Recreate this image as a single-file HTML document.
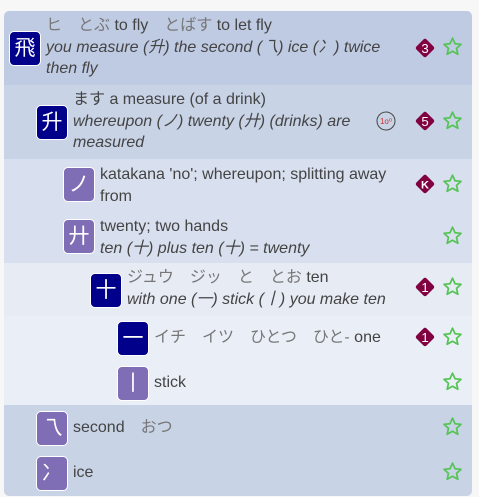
<!DOCTYPE html>
<html><head><meta charset="utf-8"><style>
body{margin:0;width:479px;height:497px;background:#f7f7f7;font-family:"Liberation Sans","Noto Sans CJK JP",sans-serif;color:#444;font-size:16px;position:relative;overflow:hidden}
.box{position:absolute;left:4px;top:11px;width:468px;height:485px;border-radius:5px;overflow:hidden}
.r{position:absolute;left:0;width:468px}
.ic{position:absolute;width:30px;height:33px;border-radius:5px;border:1px solid #fff;color:#fff;font-size:21px;line-height:33px;text-align:center;box-sizing:content-box}
.nv{background:#00008b}.pu{background:#7f6db5}
.t{position:absolute;line-height:21.5px;white-space:nowrap}
.t i{display:block}
.k{color:#777}
.st{position:absolute;left:438px;width:21px;height:21px}
.dm{position:absolute;left:410px;width:22px;height:22px}
</style></head><body>
<svg width="0" height="0" style="position:absolute"><defs>
<symbol id="star" viewBox="0 0 24 24"><path d="M12 2.5l2.9 6.3 6.8.7-5.1 4.6 1.5 6.8L12 17.4 5.9 20.9l1.5-6.8L2.3 9.5l6.8-.7z" fill="none" stroke="#55c455" stroke-width="2" stroke-linejoin="round"/></symbol>
</defs></svg>
<div class="box">
<div class="r" style="top:0;height:74px;background:#bfcbe3"></div>
<div class="r" style="top:74px;height:74px;background:#c8d3e6"></div>
<div class="r" style="top:148px;height:104px;background:#d8dfee"></div>
<div class="r" style="top:252px;height:53px;background:#e6ebf4"></div>
<div class="r" style="top:305px;height:89px;background:#eaeff7"></div>
<div class="r" style="top:394px;height:91px;background:#c8d3e6"></div>

<div class="ic nv" style="left:5px;top:20px">飛</div>
<div class="t" style="left:42px;top:4px"><span class="k">ヒ　とぶ</span> to fly　<span class="k">とばす</span> to let fly<i>you measure (升) the second (乁) ice (冫) twice</i><i>then fly</i></div>
<svg class="dm" style="top:26px" viewBox="0 0 20 20"><rect x="3.5" y="3.5" width="13" height="13" rx="2" transform="rotate(45 10 10)" fill="#800040"/><text x="10" y="14.5" font-size="12" fill="#fff" text-anchor="middle" font-family="Liberation Sans">3</text></svg>
<svg class="st" style="top:25px"><use href="#star"/></svg>

<div class="ic nv" style="left:32px;top:94px">升</div>
<div class="t" style="left:69px;top:78px">ます a measure (of a drink)<i>whereupon (ノ) twenty (廾) (drinks) are</i><i>measured</i></div>
<svg style="position:absolute;left:372px;top:100px" width="20" height="20"><circle cx="10" cy="10" r="9" fill="none" stroke="#444"/><text x="10" y="13" font-size="8" fill="#c33" text-anchor="middle">1o⁰</text></svg>
<svg class="dm" style="top:99px" viewBox="0 0 20 20"><rect x="3.5" y="3.5" width="13" height="13" rx="2" transform="rotate(45 10 10)" fill="#800040"/><text x="10" y="14.5" font-size="12" fill="#fff" text-anchor="middle" font-family="Liberation Sans">5</text></svg>
<svg class="st" style="top:99px"><use href="#star"/></svg>

<div class="ic pu" style="left:59px;top:156px">ノ</div>
<div class="t" style="left:96px;top:153px">katakana 'no'; whereupon; splitting away<br>from</div>
<svg class="dm" style="top:162px" viewBox="0 0 20 20"><rect x="3.5" y="3.5" width="13" height="13" rx="2" transform="rotate(45 10 10)" fill="#800040"/><text x="10" y="14" font-size="10" font-weight="bold" fill="#fff" text-anchor="middle" font-family="Liberation Sans">K</text></svg>
<svg class="st" style="top:162px"><use href="#star"/></svg>

<div class="ic pu" style="left:59px;top:208px">廾</div>
<div class="t" style="left:96px;top:205px">twenty; two hands<i>ten (十) plus ten (十) = twenty</i></div>
<svg class="st" style="top:214px"><use href="#star"/></svg>

<div class="ic nv" style="left:86px;top:262px">十</div>
<div class="t" style="left:123px;top:256px"><span class="k">ジュウ　ジッ　と　とお</span> ten<i>with one (一) stick (丨) you make ten</i></div>
<svg class="dm" style="top:265px" viewBox="0 0 20 20"><rect x="3.5" y="3.5" width="13" height="13" rx="2" transform="rotate(45 10 10)" fill="#800040"/><text x="10" y="14.5" font-size="12" fill="#fff" text-anchor="middle" font-family="Liberation Sans">1</text></svg>
<svg class="st" style="top:265px"><use href="#star"/></svg>

<div class="ic nv" style="left:113px;top:310px">一</div>
<div class="t" style="left:150px;top:316px"><span class="k">イチ　イツ　ひとつ　ひと-</span> one</div>
<svg class="dm" style="top:315px" viewBox="0 0 20 20"><rect x="3.5" y="3.5" width="13" height="13" rx="2" transform="rotate(45 10 10)" fill="#800040"/><text x="10" y="14.5" font-size="12" fill="#fff" text-anchor="middle" font-family="Liberation Sans">1</text></svg>
<svg class="st" style="top:315px"><use href="#star"/></svg>

<div class="ic pu" style="left:113px;top:355px">丨</div>
<div class="t" style="left:150px;top:361px">stick</div>
<svg class="st" style="top:360px"><use href="#star"/></svg>

<div class="ic pu" style="left:32px;top:400px">乁</div>
<div class="t" style="left:69px;top:406px">second　<span class="k">おつ</span></div>
<svg class="st" style="top:405px"><use href="#star"/></svg>

<div class="ic pu" style="left:32px;top:445px">冫</div>
<div class="t" style="left:69px;top:451px">ice</div>
<svg class="st" style="top:450px"><use href="#star"/></svg>
</div>
</body></html>
